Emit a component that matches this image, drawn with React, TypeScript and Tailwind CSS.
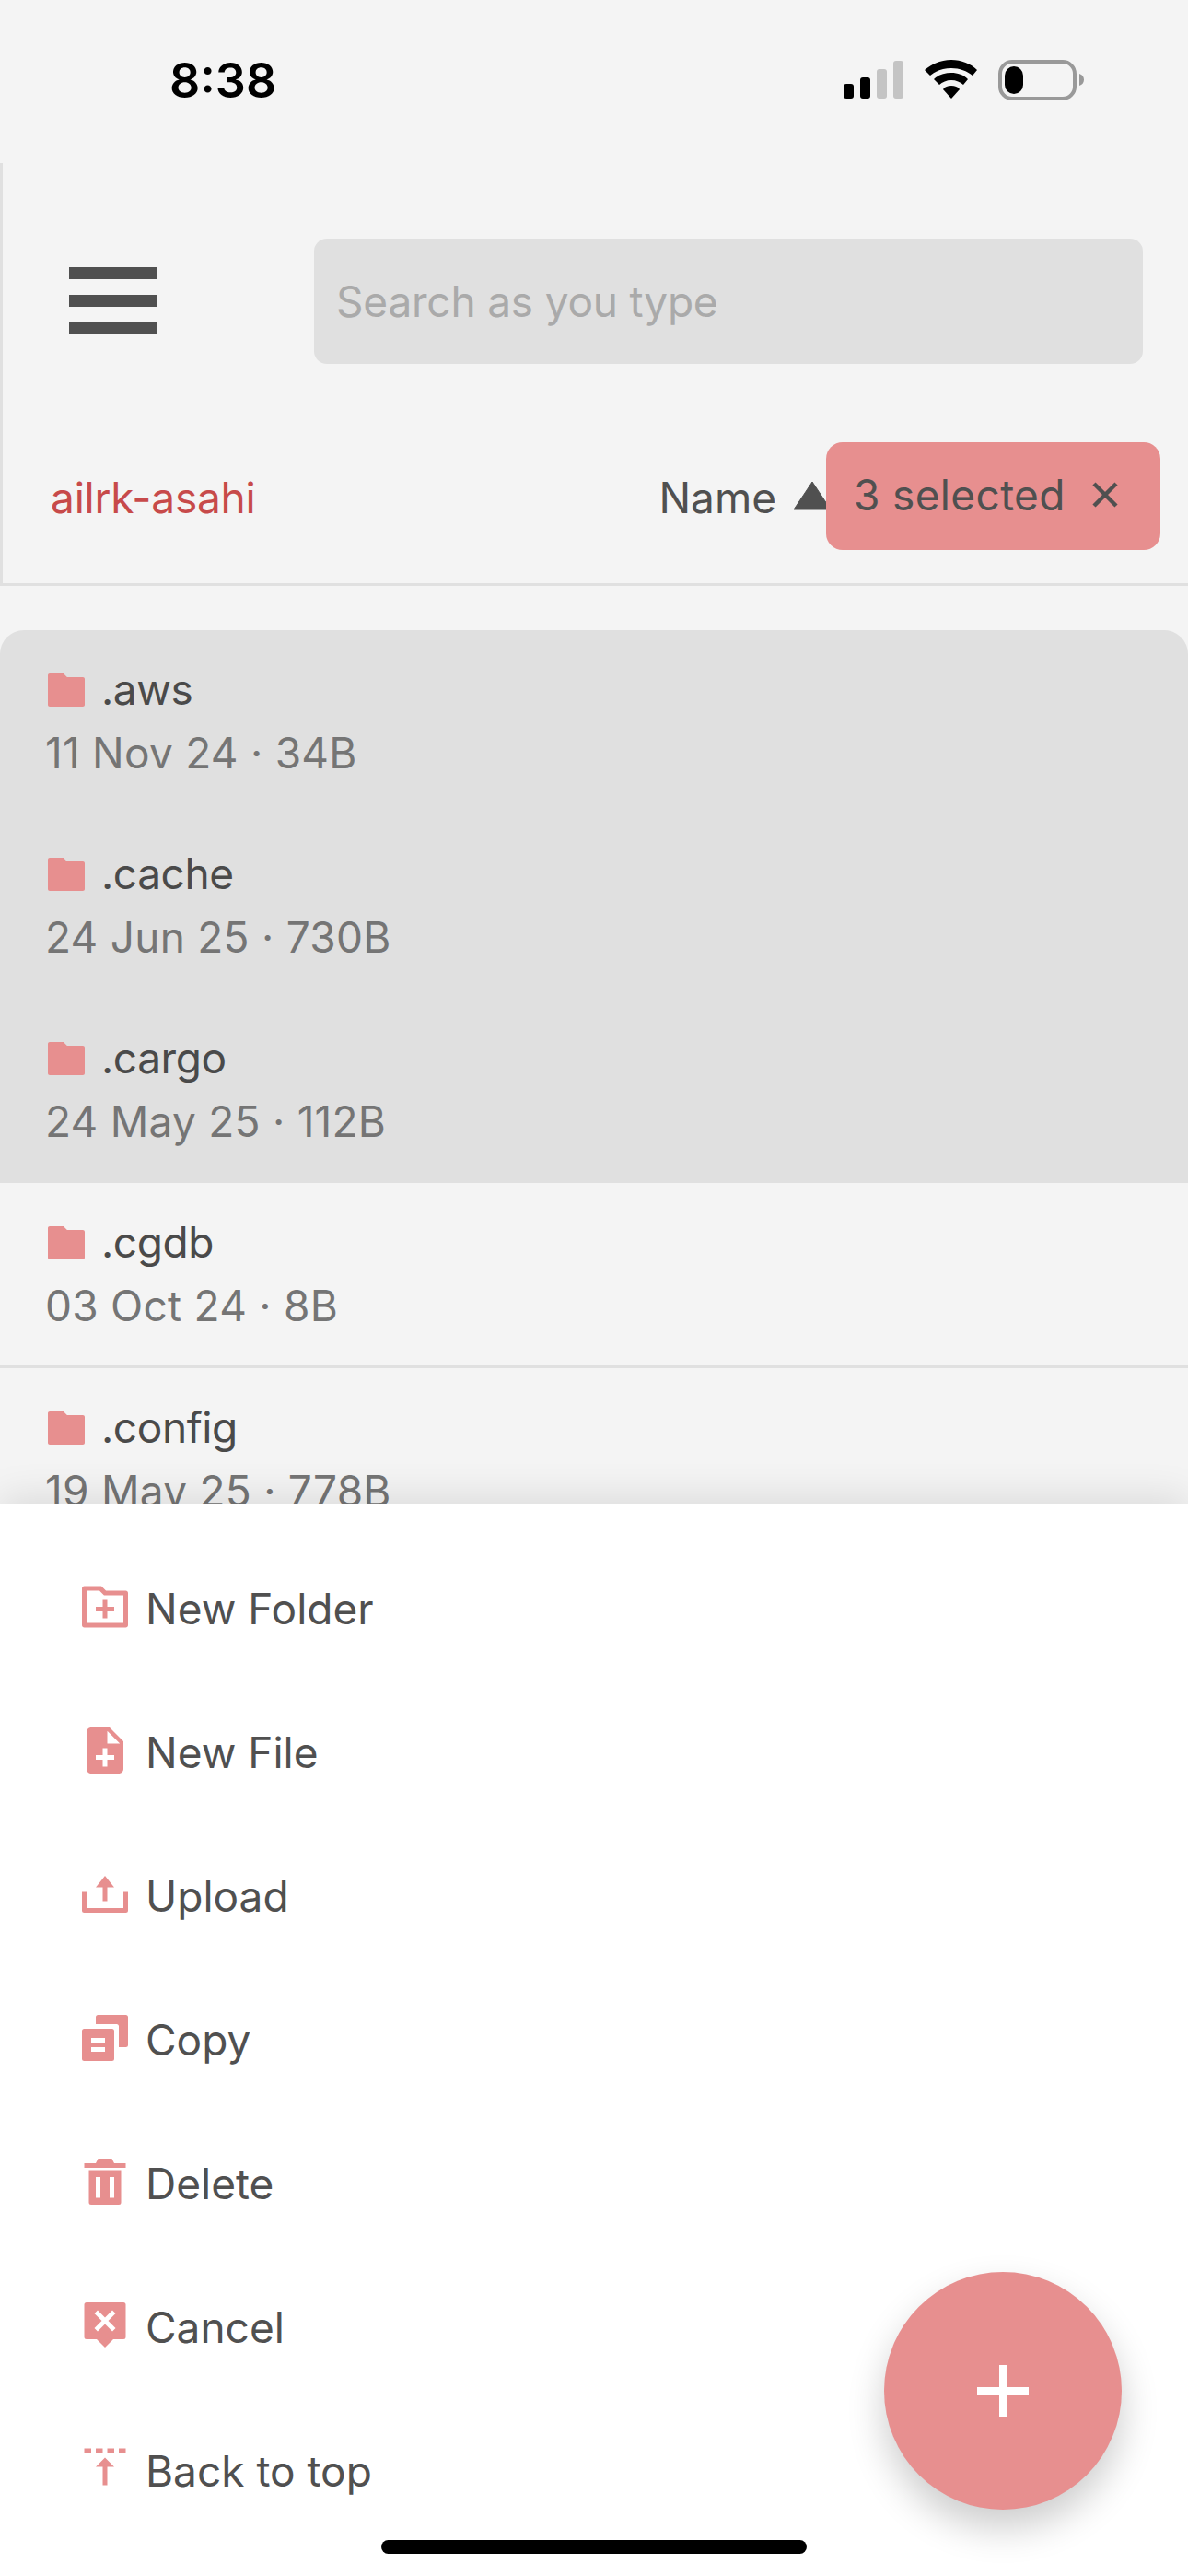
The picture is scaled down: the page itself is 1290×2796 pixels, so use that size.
import { ReactNode } from "react";

const files = [
  { name: ".aws", meta: "11 Nov 24 · 34B", selected: true },
  { name: ".cache", meta: "24 Jun 25 · 730B", selected: true },
  { name: ".cargo", meta: "24 May 25 · 112B", selected: true },
  { name: ".cgdb", meta: "03 Oct 24 · 8B", selected: false },
  { name: ".config", meta: "19 May 25 · 778B", selected: false },
];

const FOLDER = "M12.4142 5H21C21.5523 5 22 5.44772 22 6V20C22 20.5523 21.5523 21 21 21H3C2.44772 21 2 20.5523 2 20V4C2 3.44772 2.44772 3 3 3H10.4142L12.4142 5Z";

const actions: { label: string; path: string }[] = [
  {
    label: "New Folder",
    path: "M12.4142 5H21C21.5523 5 22 5.44772 22 6V20C22 20.5523 21.5523 21 21 21H3C2.44772 21 2 20.5523 2 20V4C2 3.44772 2.44772 3 3 3H10.4142L12.4142 5ZM4 5V19H20V7H11.5858L9.58579 5H4ZM11 12V9H13V12H16V14H13V17H11V14H8V12H11Z",
  },
  {
    label: "New File",
    path: "M14 2H6c-1.1 0-1.99.9-1.99 2L4 20c0 1.1.89 2 2 2h12c1.1 0 2-.9 2-2V8l-6-6zm2 14h-3v3h-2v-3H8v-2h3v-3h2v3h3v2zm-3-7V3.5L18.5 9H13z",
  },
  {
    label: "Upload",
    path: "M2 11h2v7h16v-7h2v8a1 1 0 0 1-1 1H3a1 1 0 0 1-1-1zM12 4l4 5h-3v6h-2V9H8z",
  },
  {
    label: "Copy",
    path: "M8 3a1 1 0 0 1 1-1h12a1 1 0 0 1 1 1v12a1 1 0 0 1-1 1h-3V7a1 1 0 0 0-1-1H8zM3 8h12a1 1 0 0 1 1 1v12a1 1 0 0 1-1 1H3a1 1 0 0 1-1-1V9a1 1 0 0 1 1-1zM6 12v2h6v-2zM6 16v2h6v-2z",
  },
  {
    label: "Delete",
    path: "M3 4h5l1-2h6l1 2h5v2H3zM5 7h14v14a1 1 0 0 1-1 1H6a1 1 0 0 1-1-1zM8 10v9h2v-9zM14 10v9h2v-9z",
  },
  {
    label: "Cancel",
    path: "M4 2h16a1 1 0 0 1 1 1v14a1 1 0 0 1-1 1h-4.4L12 21.6 8.4 18H4a1 1 0 0 1-1-1V3a1 1 0 0 1 1-1zM12 8.6l3.2-3.2 1.4 1.4L13.4 10l3.2 3.2-1.4 1.4L12 11.4l-3.2 3.2-1.4-1.4L10.6 10 7.4 6.8l1.4-1.4z",
  },
  {
    label: "Back to top",
    path: "M3 3h3v2H3zM8 3h3v2H8zM13 3h3v2h-3zM18 3h3v2h-3zM12 7l4 4h-3v8h-2v-8H8z",
  },
];

function Icon({ path, className }: { path: string; className: string }): ReactNode {
  return (
    <svg viewBox="0 0 24 24" className={className} fill="#e78f8f">
      <path d={path} fillRule="evenodd" />
    </svg>
  );
}

function StatusBar() {
  return (
    <div className="relative h-[177px] shrink-0">
      <span className="absolute left-[184px] top-[57px] text-[52px] leading-[62px] font-semibold text-black">8:38</span>
      <svg className="absolute left-[910px] top-[60px]" width="270" height="52" viewBox="910 60 270 52">
        <rect x="916" y="91" width="11" height="16" rx="3" fill="#000" />
        <rect x="934" y="84" width="11" height="23" rx="3" fill="#000" />
        <rect x="952" y="75" width="11" height="32" rx="3" fill="#c4c4c4" />
        <rect x="970" y="66" width="11" height="41" rx="3" fill="#c4c4c4" />
        <path d="M1033 65c11 0 21 4 28 11l-5 6c-6-5-14-8-23-8s-17 3-23 8l-6-6c8-7 18-11 29-11z" fill="#000" />
        <path d="M1033 79c7 0 13 2 18 7l-5 6c-3-3-8-5-13-5s-10 2-13 5l-6-6c5-5 12-7 19-7z" fill="#000" />
        <path d="M1033 93c4 0 7 1 9 4l-9 10-9-10c2-3 5-4 9-4z" fill="#000" />
        <rect x="1086" y="67" width="81" height="40" rx="13" fill="none" stroke="#999" strokeWidth="4" />
        <rect x="1091" y="72" width="20" height="30" rx="10" fill="#000" />
        <path d="M1172 80c3 1 5 3 5 6.500s-2 5.500-5 6.500z" fill="#999" />
      </svg>
    </div>
  );
}

function Header() {
  return (
    <div className="relative h-[459px] shrink-0 border-l-[3px] border-b-[3px] border-[#e0e0e0]">
      <div className="flex h-[303px] items-start pl-[72px] pr-[49px] pt-[82px]">
        <button className="mt-[31px] flex w-[96px] flex-col gap-[17px]">
          <span className="block h-[13px] bg-[#505050]" />
          <span className="block h-[13px] bg-[#505050]" />
          <span className="block h-[13px] bg-[#505050]" />
        </button>
        <input
          className="ml-[170px] h-[136px] flex-1 rounded-[14px] bg-[#e0e0e0] px-[24px] text-[46px] tracking-[-0.2px] outline-none placeholder:text-[#aaaaaa]"
          placeholder="Search as you type"
        />
      </div>
      <div className="flex items-center justify-between pl-[52px] pt-[32px]">
        <span className="text-[46px] leading-[56px] tracking-[-0.2px] text-[#c74a4a]">ailrk-asahi</span>
        <div className="mr-[387px] flex items-center gap-[18px]">
          <span className="text-[46px] leading-[56px] text-[#505050]">Name</span>
          <svg width="42" height="32" viewBox="0 0 42 32" className="mt-[-4px]">
            <path d="M21 1 41 31H1z" fill="#505050" stroke="#505050" strokeLinejoin="round" />
          </svg>
        </div>
      </div>
      <div className="absolute left-[894px] top-[303px] flex h-[117px] w-[363px] items-start rounded-[18px] bg-[#e78f8f] pl-[30px] pt-[29px] text-[46px] leading-[56px] tracking-[0.35px] text-[#505050]">
        <span>3 selected</span>
        <svg width="28" height="28" viewBox="0 0 28 28" className="ml-[29px] mt-[14px]">
          <path d="M2 2 26 26M26 2 2 26" stroke="#505050" strokeWidth="4.500" />
        </svg>
      </div>
    </div>
  );
}

function FileRow({ name, meta, selected }: { name: string; meta: string; selected: boolean }) {
  return (
    <div className={selected ? "h-[200px] shrink-0 bg-[#e0e0e0] pl-[48px] pt-[36px] first:rounded-t-[26px]" : "h-[201px] shrink-0 border-b-[3px] border-[#e0e0e0] pl-[48px] pt-[36px] last:border-b-0"}>
      <div className="flex h-[56px] items-center gap-[14px]">
        <Icon path={FOLDER} className="mt-[2px] h-[48px] w-[48px]" />
        <span className="text-[46px] leading-[56px] tracking-[-0.4px] text-[#4a4a4a]">{name}</span>
      </div>
      <div className="ml-[1px] mt-[13px] text-[46px] leading-[56px] tracking-[0.25px] text-[#757575]">{meta}</div>
    </div>
  );
}

function ActionSheet() {
  return (
    <div className="relative z-10 h-[1164px] shrink-0 bg-white pl-[84px] pt-[82px] shadow-[0_-6px_40px_rgba(0,0,0,0.11)]">
      <div className="flex flex-col gap-[96px]">
        {actions.map((a) => (
          <div key={a.label} className="flex h-[60px] items-center gap-[14px]">
            <Icon path={a.path} className="h-[60px] w-[60px] shrink-0" />
            <span className="mt-[3px] text-[46px] leading-[56px] text-[#505050]">{a.label}</span>
          </div>
        ))}
      </div>
      <button className="absolute left-[960px] top-[834px] flex h-[258px] w-[258px] items-center justify-center rounded-full bg-[#e78f8f] shadow-[0_20px_40px_rgba(0,0,0,0.2)]">
        <svg width="56" height="56" viewBox="0 0 56 56">
          <path d="M24 0h8v24h24v8H32v24h-8V32H0v-8h24z" fill="#fff" />
        </svg>
      </button>
      <div className="absolute left-[414px] top-[1125px] h-[15px] w-[462px] rounded-full bg-black" />
    </div>
  );
}

export default function App() {
  return (
    <div className="flex h-[2796px] w-[1290px] flex-col overflow-hidden bg-[#f4f4f4] font-['Inter',sans-serif]">
      <StatusBar />
      <Header />
      <div className="flex min-h-0 flex-1 flex-col overflow-hidden pt-[48px]">
        {files.map((f) => (
          <FileRow key={f.name} {...f} />
        ))}
      </div>
      <ActionSheet />
    </div>
  );
}
